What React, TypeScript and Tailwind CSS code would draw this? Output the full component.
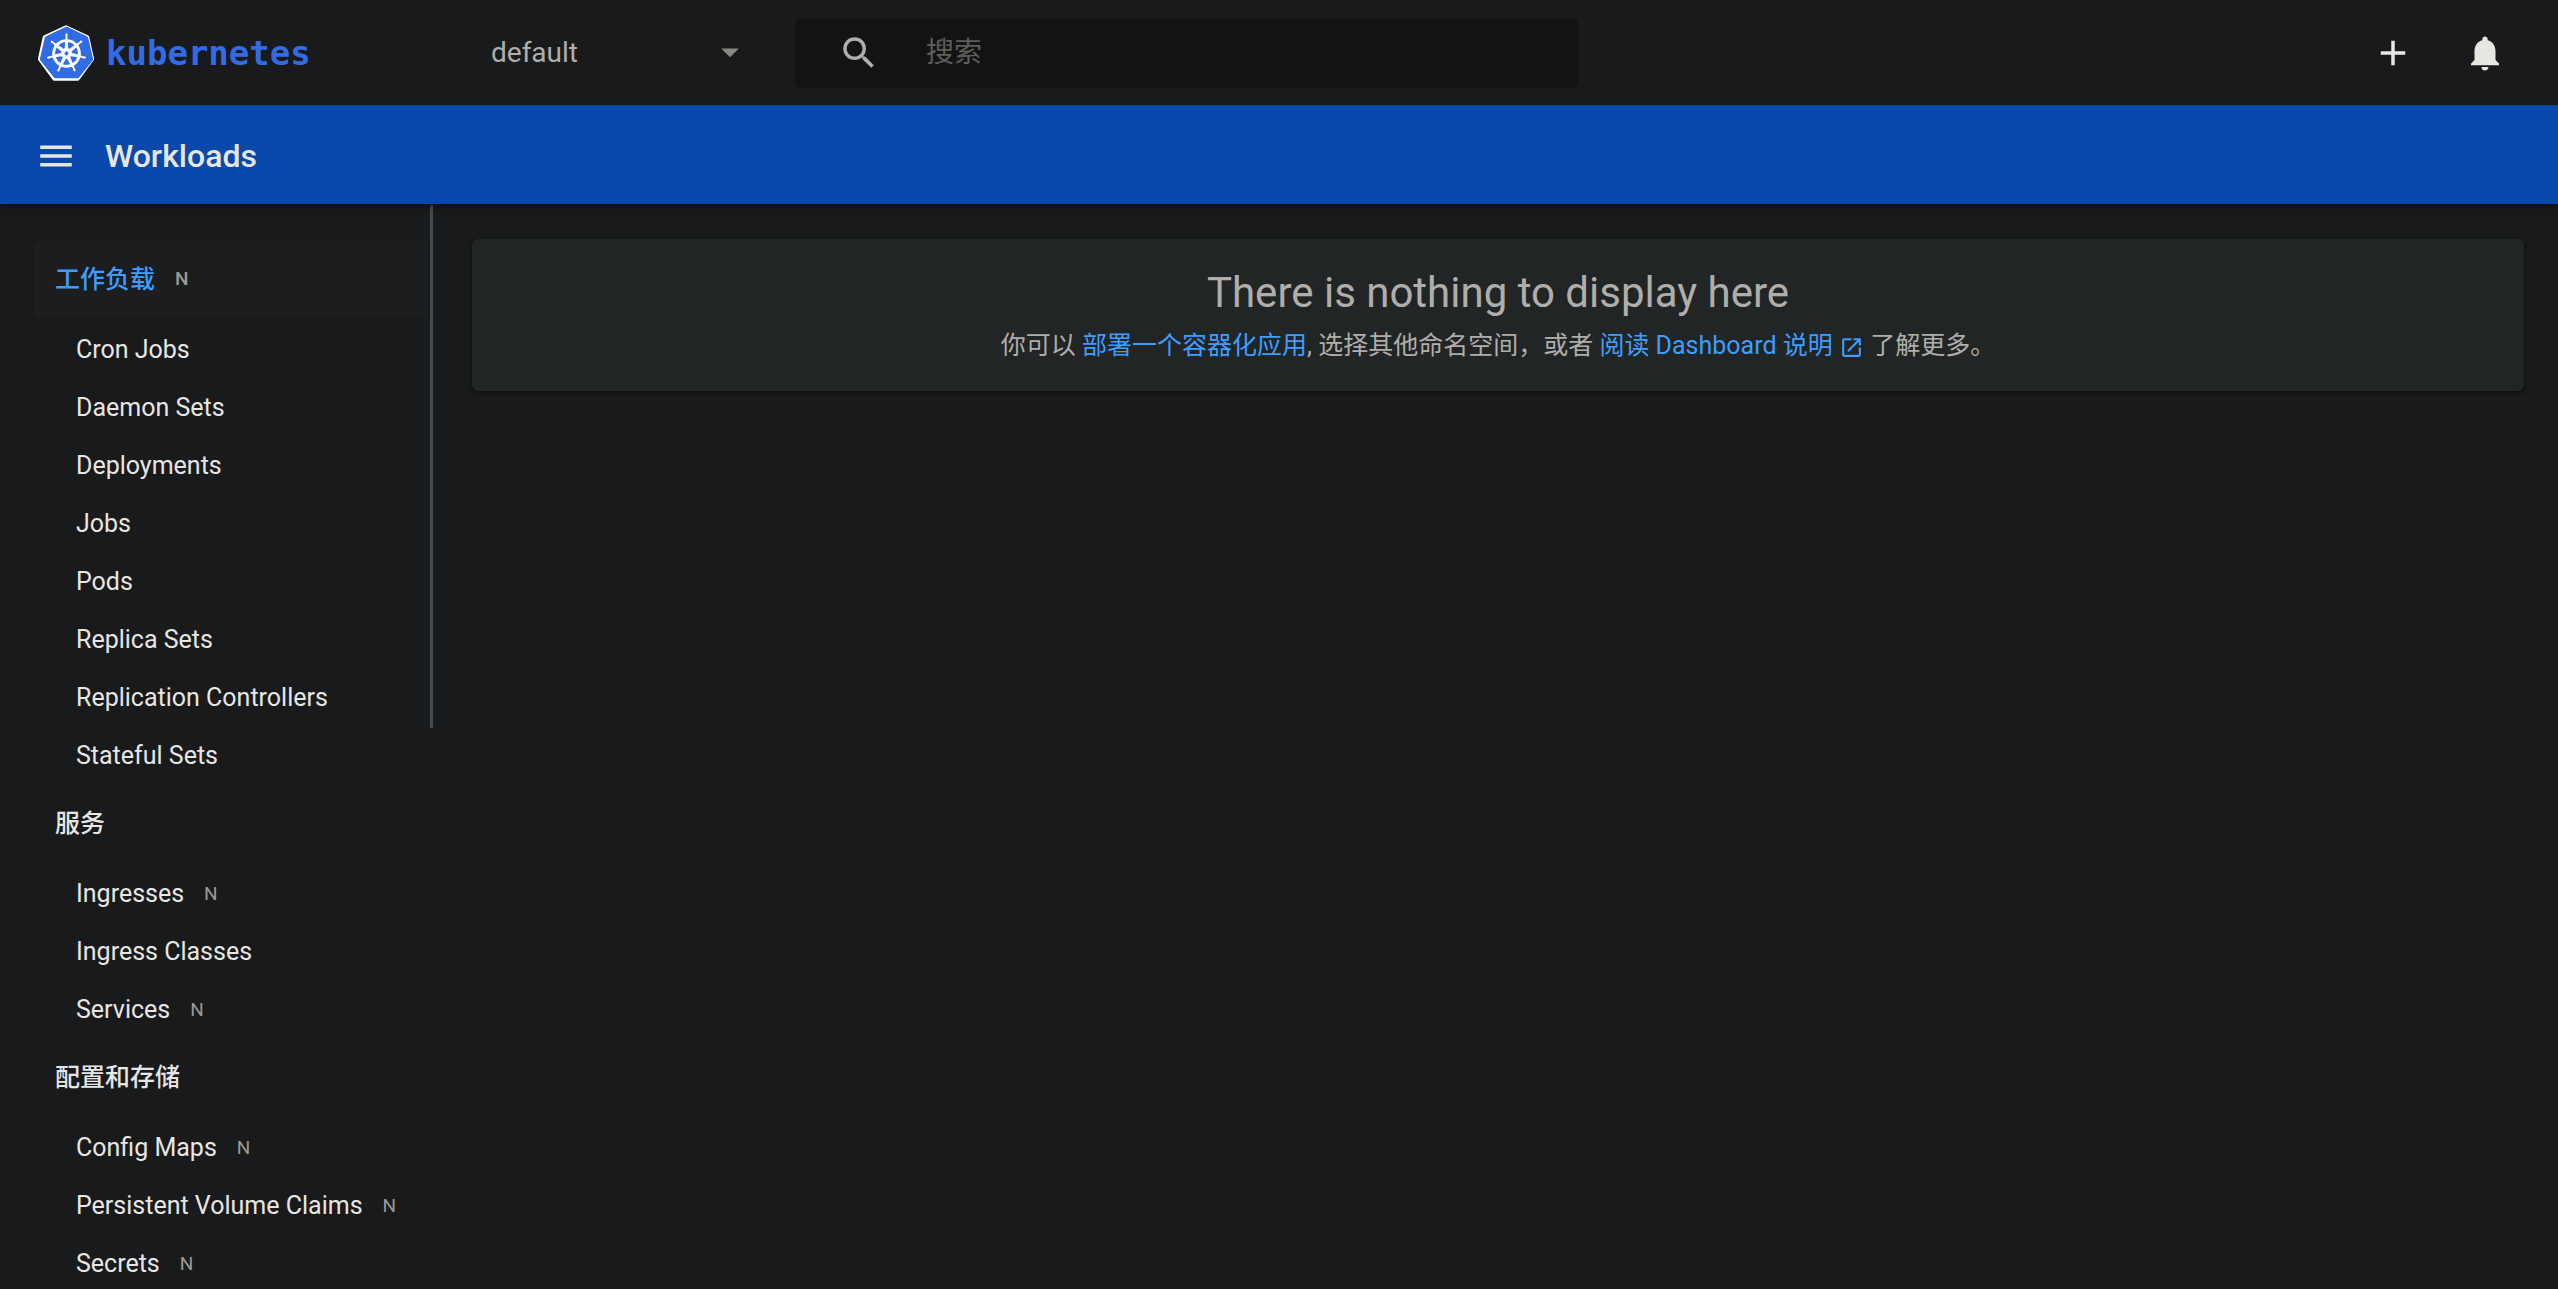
import React from "react";
import {
  MdAdd,
  MdArrowDropDown,
  MdMenu,
  MdNotifications,
  MdOpenInNew,
  MdSearch,
} from "react-icons/md";
import { SiKubernetes } from "react-icons/si";

type Item = { label: string; namespaced?: boolean };
type Group = { title: string; namespaced?: boolean; active?: boolean; items: Item[] };

const groups: Group[] = [
  {
    title: "工作负载",
    namespaced: true,
    active: true,
    items: [
      { label: "Cron Jobs" },
      { label: "Daemon Sets" },
      { label: "Deployments" },
      { label: "Jobs" },
      { label: "Pods" },
      { label: "Replica Sets" },
      { label: "Replication Controllers" },
      { label: "Stateful Sets" },
    ],
  },
  {
    title: "服务",
    items: [
      { label: "Ingresses", namespaced: true },
      { label: "Ingress Classes" },
      { label: "Services", namespaced: true },
    ],
  },
  {
    title: "配置和存储",
    items: [
      { label: "Config Maps", namespaced: true },
      { label: "Persistent Volume Claims", namespaced: true },
      { label: "Secrets", namespaced: true },
    ],
  },
];

function Logo() {
  return (
    <a href="#overview" className="flex w-[425px] shrink-0 items-center pl-[38px]">
      <span className="relative flex size-14 items-center justify-center">
        <svg viewBox="0 0 56 56" className="absolute inset-0 size-14" aria-hidden="true">
          <path
            d="M28 2 L49.5 12.2 L54.4 34 L39.8 54 L16.2 54 L1.6 34 L6.5 12.2 Z"
            fill="#fff"
            stroke="#fff"
            strokeWidth="3.5"
            strokeLinejoin="round"
          />
        </svg>
        <SiKubernetes className="relative size-[53px] text-[#326ce5]" aria-hidden="true" />
      </span>
      <span className="ml-3 font-['DejaVu_Sans_Mono',monospace] text-[34px] leading-none font-bold text-[#326ce5]">
        kubernetes
      </span>
    </a>
  );
}

function TopBar() {
  return (
    <header className="flex h-[105px] shrink-0 items-center">
      <Logo />
      <div className="relative ml-9 h-[69px] w-[305px] shrink-0 rounded-md border border-[#1c1e1f]">
        <select
          aria-label="Namespace"
          className="size-full appearance-none bg-transparent pl-[29px] text-[28px] text-[#b0aeaa] outline-none"
        >
          <option>default</option>
        </select>
        <MdArrowDropDown
          className="pointer-events-none absolute top-3 right-3.5 size-[42px] text-[#8a8883]"
          aria-hidden="true"
        />
      </div>
      <label className="ml-[29px] flex h-[70px] w-[783px] items-center rounded-md bg-[#121413] pl-[43px]">
        <MdSearch className="size-[42px] shrink-0 text-[#b0aeaa]" aria-hidden="true" />
        <input
          type="text"
          placeholder="搜索"
          aria-label="搜索"
          className="ml-[46px] min-w-0 flex-1 bg-transparent text-[28px] outline-none placeholder:text-[#5f5d59]"
        />
      </label>
      <div className="mr-[38px] ml-auto flex gap-[22px]">
        <button aria-label="Create" className="flex size-[70px] items-center justify-center">
          <MdAdd className="size-[42px]" />
        </button>
        <button aria-label="Notifications" className="flex size-[70px] items-center justify-center">
          <MdNotifications className="size-[42px]" />
        </button>
      </div>
    </header>
  );
}

function Badge() {
  return <span className="ml-5 text-[19px] text-[#9d9a94]">N</span>;
}

function Sidebar() {
  return (
    <aside className="relative w-[437px] shrink-0 overflow-hidden pt-[37px] pl-[34px]">
      <nav className="w-[394px] text-[25px]">
        {groups.map((group) => (
          <section key={group.title}>
            <a
              href="#"
              className={
                group.active
                  ? "flex h-[77px] items-center rounded-md bg-[#1b1d1e] pl-[21px] font-medium text-[#3d9eff]"
                  : "flex h-[77px] items-center pl-[21px] font-medium"
              }
            >
              {group.title}
              {group.namespaced && <Badge />}
            </a>
            <ul className="pt-[3px]">
              {group.items.map((item) => (
                <li key={item.label}>
                  <a href="#" className="flex h-[58px] items-center pl-[42px]">
                    {item.label}
                    {item.namespaced && <Badge />}
                  </a>
                </li>
              ))}
            </ul>
          </section>
        ))}
      </nav>
      <div className="absolute top-px right-1 h-[523px] w-[3px] bg-[#454a4c]" />
    </aside>
  );
}

export default function App() {
  return (
    <div className="flex h-screen flex-col overflow-hidden bg-[#181a1b] font-[Roboto,'Noto_Sans_CJK_SC',sans-serif] text-[#e8e6e3]">
      <TopBar />
      <div className="z-10 flex h-[99px] shrink-0 items-center bg-[#0849ab] pt-0.5 pl-[35px] shadow-[0_2px_6px_rgba(0,0,0,0.5)]">
        <button aria-label="Toggle navigation">
          <MdMenu className="size-[42px]" />
        </button>
        <h1 className="ml-7 text-[32px] leading-10 font-medium">Workloads</h1>
      </div>
      <div className="flex min-h-0 flex-1">
        <Sidebar />
        <main className="min-w-0 flex-1 p-[35px] pr-[34px]">
          <section className="rounded-md bg-[#222526] pt-[30px] pb-6 text-center text-[#b0aeaa] shadow-[0_2px_4px_rgba(0,0,0,0.5)]">
            <h2 className="text-[42px] leading-12">There is nothing to display here</h2>
            <p className="mt-2 text-[25px] leading-[42px]">
              你可以{" "}
              <a href="#deploy" className="text-[#3d9eff]">
                部署一个容器化应用
              </a>
              , 选择其他命名空间，或者{" "}
              <a href="#docs" className="text-[#3d9eff]">
                阅读 Dashboard 说明{" "}
                <MdOpenInNew className="inline size-[25px]" aria-hidden="true" />
              </a>{" "}
              了解更多。
            </p>
          </section>
        </main>
      </div>
    </div>
  );
}
